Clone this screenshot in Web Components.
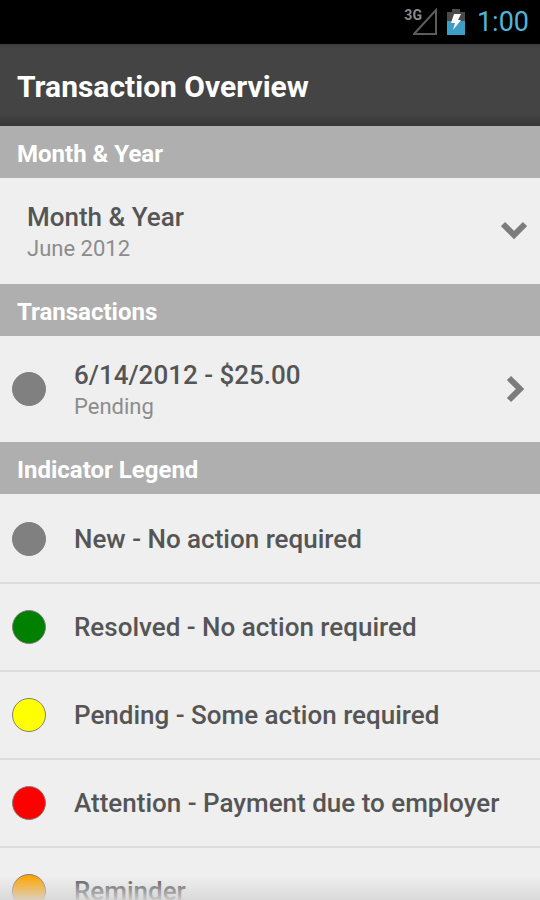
<!DOCTYPE html>
<html lang="en">
<head>
<meta charset="utf-8">
<meta name="viewport" content="width=device-width, initial-scale=1">
<title>Transaction Overview</title>
<style>
  :root {
    --color-bar: #444;
    --color-section: #afafaf;
    --color-row: #efefef;
    --color-line: #dcdcdc;
    --color-text: #555;
    --color-muted: #8c8c8c;
    --color-icon: #7c7c7c;
    --color-holo: #4fb4d8;
  }

  body {
    margin: 0;
    font-family: Roboto, "Liberation Sans", sans-serif;
    color: var(--color-text);
    background: var(--color-row);
  }
</style>
</head>
<body>

<app-screen>
  <status-bar slot="top" network="3G">1:00</status-bar>
  <title-bar slot="top">Transaction Overview</title-bar>

  <list-section heading="Month &amp; Year">
    <detail-row kind="expand">
      Month &amp; Year
      <span slot="note">June 2012</span>
    </detail-row>
  </list-section>

  <list-section heading="Transactions">
    <detail-row kind="link" href="#transaction">
      <status-dot slot="icon" color="gray"></status-dot>
      6/14/2012 - $25.00
      <span slot="note">Pending</span>
    </detail-row>
  </list-section>

  <list-section heading="Indicator Legend">
    <legend-row color="gray">New - No action required</legend-row>
    <legend-row color="green">Resolved - No action required</legend-row>
    <legend-row color="yellow">Pending - Some action required</legend-row>
    <legend-row color="red">Attention - Payment due to employer</legend-row>
    <legend-row color="orange">Reminder</legend-row>
  </list-section>
</app-screen>

<script>
/* Screen: fixed bars on top, scrolling list with a fade at the lower edge */
class AppScreen extends HTMLElement {
  constructor() {
    super();

    this.attachShadow({ mode: 'open' });

    this.shadowRoot.innerHTML = /*html*/ `
      <style>
        :host {
          display: flex;
          flex-direction: column;
          height: 100vh;
          position: relative;
        }

        main {
          flex: 1;
          min-height: 0;
          overflow-y: auto;
          scrollbar-width: none;
        }

        .fade {
          position: absolute;
          left: 0;
          right: 0;
          bottom: 0;
          height: 24px;
          pointer-events: none;
          background: linear-gradient(rgba(239, 239, 239, 0), rgba(214, 214, 214, 0.9));
        }
      </style>
      <slot name="top"></slot>
      <main><slot></slot></main>
      <div class="fade"></div>
    `;
  }
}

class StatusBar extends HTMLElement {
  constructor() {
    super();

    this.attachShadow({ mode: 'open' });

    this.shadowRoot.innerHTML = /*html*/ `
      <style>
        :host {
          display: flex;
          justify-content: flex-end;
          align-items: center;
          box-sizing: border-box;
          flex: none;
          height: 44px;
          padding: 0 11px;
          background: #000;
          color: var(--color-holo);
          font-size: 27px;
          line-height: 46px;
        }

        svg {
          display: block;
        }

        .network {
          align-self: flex-start;
          margin-top: 7px;
          color: #8a8a8a;
          font-size: 14px;
          font-weight: 700;
          line-height: 16px;
        }

        .signal {
          margin: 0 10px 0 -9px;
        }

        .battery {
          margin-right: 12px;
        }
      </style>
      <span class="network">${this.getAttribute('network')}</span>
      <svg class="signal" width="24" height="28" viewBox="0 0 24 28" aria-hidden="true">
        <path d="M23 2V26H1Z" fill="none" stroke="#5c5c5c" stroke-width="2"/>
      </svg>
      <svg class="battery" width="18" height="28" viewBox="0 0 18 28" aria-hidden="true">
        <path d="M5 1H13V4H18V13H0V4H5Z" fill="#4a4a4a"/>
        <path d="M0 13H18V27H0Z" fill="#3d9fc6"/>
        <path d="M7 6H14L11 12H14L6 22L8 15H4Z" fill="#fff"/>
      </svg>
      <time><slot></slot></time>
    `;
  }
}

class TitleBar extends HTMLElement {
  constructor() {
    super();

    this.attachShadow({ mode: 'open' });

    this.shadowRoot.innerHTML = /*html*/ `
      <style>
        :host {
          display: flex;
          align-items: center;
          box-sizing: border-box;
          flex: none;
          height: 82px;
          padding: 4px 17px 0;
          color: #fff;
          background: linear-gradient(#3c3c3c, var(--color-bar) 4px, var(--color-bar) 70px, #363636);
        }

        h1 {
          margin: 0;
          font-size: 30px;
          font-weight: 700;
          line-height: 36px;
        }
      </style>
      <h1><slot></slot></h1>
    `;
  }
}

class ListSection extends HTMLElement {
  constructor() {
    super();

    this.attachShadow({ mode: 'open' });

    this.shadowRoot.innerHTML = /*html*/ `
      <style>
        :host {
          display: block;
        }

        h2 {
          margin: 0;
          padding: 14px 17px 10px;
          background: var(--color-section);
          color: #fff;
          font-size: 24px;
          font-weight: 700;
          line-height: 28px;
        }
      </style>
      <section>
        <h2></h2>
        <slot></slot>
      </section>
    `;

    this.shadowRoot.querySelector('h2').textContent = this.getAttribute('heading');
  }
}

class StatusDot extends HTMLElement {
  constructor() {
    super();

    this.attachShadow({ mode: 'open' });

    this.shadowRoot.innerHTML = /*html*/ `
      <style>
        :host {
          display: block;
          box-sizing: border-box;
          flex: none;
          width: 34px;
          height: 34px;
          border: 1px solid #808080;
          border-radius: 50%;
          background: ${this.getAttribute('color')};
        }
      </style>
    `;
  }
}

/* Two line row: a button that expands, or a link to the next screen */
class DetailRow extends HTMLElement {
  constructor() {
    super();

    this.attachShadow({ mode: 'open' });

    this.isLink = this.getAttribute('kind') === 'link';

    const open = this.isLink
      ? `<a class="row" href="${this.getAttribute('href')}">`
      : `<button class="row" type="button" aria-expanded="false">`;
    const close = this.isLink ? '</a>' : '</button>';
    const chevron = this.isLink ? 'M8 3L19 14L8 25' : 'M2 7L13 18L24 7';

    this.shadowRoot.innerHTML = /*html*/ `
      <style>
        :host {
          display: block;
        }

        .row {
          display: flex;
          align-items: center;
          gap: 28px;
          box-sizing: border-box;
          width: 100%;
          min-height: 106px;
          padding: 0 13px 0 12px;
          border: 0;
          background: var(--color-row);
          color: inherit;
          font: inherit;
          text-align: left;
          text-decoration: none;
        }

        button.row {
          padding-left: 27px;
        }

        .text {
          flex: 1;
          padding-top: 2px;
        }

        .label {
          display: block;
          font-size: 26px;
          font-weight: 500;
          line-height: 34px;
        }

        .note {
          display: block;
          color: var(--color-muted);
          font-size: 22px;
          line-height: 30px;
        }

        svg {
          display: block;
          flex: none;
        }

        path {
          fill: none;
          stroke: var(--color-icon);
          stroke-width: 6px;
        }
      </style>
      ${open}
        <slot name="icon"></slot>
        <span class="text">
          <span class="label"><slot></slot></span>
          <span class="note"><slot name="note"></slot></span>
        </span>
        <svg width="26" height="28" viewBox="0 0 26 28" aria-hidden="true">
          <path d="${chevron}"/>
        </svg>
      ${close}
    `;

    if (!this.isLink) {
      const button = this.shadowRoot.querySelector('button');
      button.addEventListener('click', () => {
        const expanded = button.getAttribute('aria-expanded') === 'true';
        button.setAttribute('aria-expanded', String(!expanded));
      });
    }
  }
}

class LegendRow extends HTMLElement {
  constructor() {
    super();

    this.attachShadow({ mode: 'open' });

    this.shadowRoot.innerHTML = /*html*/ `
      <style>
        :host {
          display: flex;
          align-items: center;
          gap: 28px;
          box-sizing: border-box;
          min-height: 88px;
          padding: 0 13px 0 12px;
          border-top: 2px solid var(--color-line);
          background: var(--color-row);
          font-size: 26px;
          font-weight: 500;
          line-height: 34px;
        }

        :host(:first-of-type) {
          border-top-color: var(--color-row);
        }
      </style>
      <status-dot color="${this.getAttribute('color')}"></status-dot>
      <span><slot></slot></span>
    `;
  }
}

customElements.define('app-screen', AppScreen);
customElements.define('status-bar', StatusBar);
customElements.define('title-bar', TitleBar);
customElements.define('list-section', ListSection);
customElements.define('status-dot', StatusDot);
customElements.define('detail-row', DetailRow);
customElements.define('legend-row', LegendRow);
</script>
</body>
</html>
